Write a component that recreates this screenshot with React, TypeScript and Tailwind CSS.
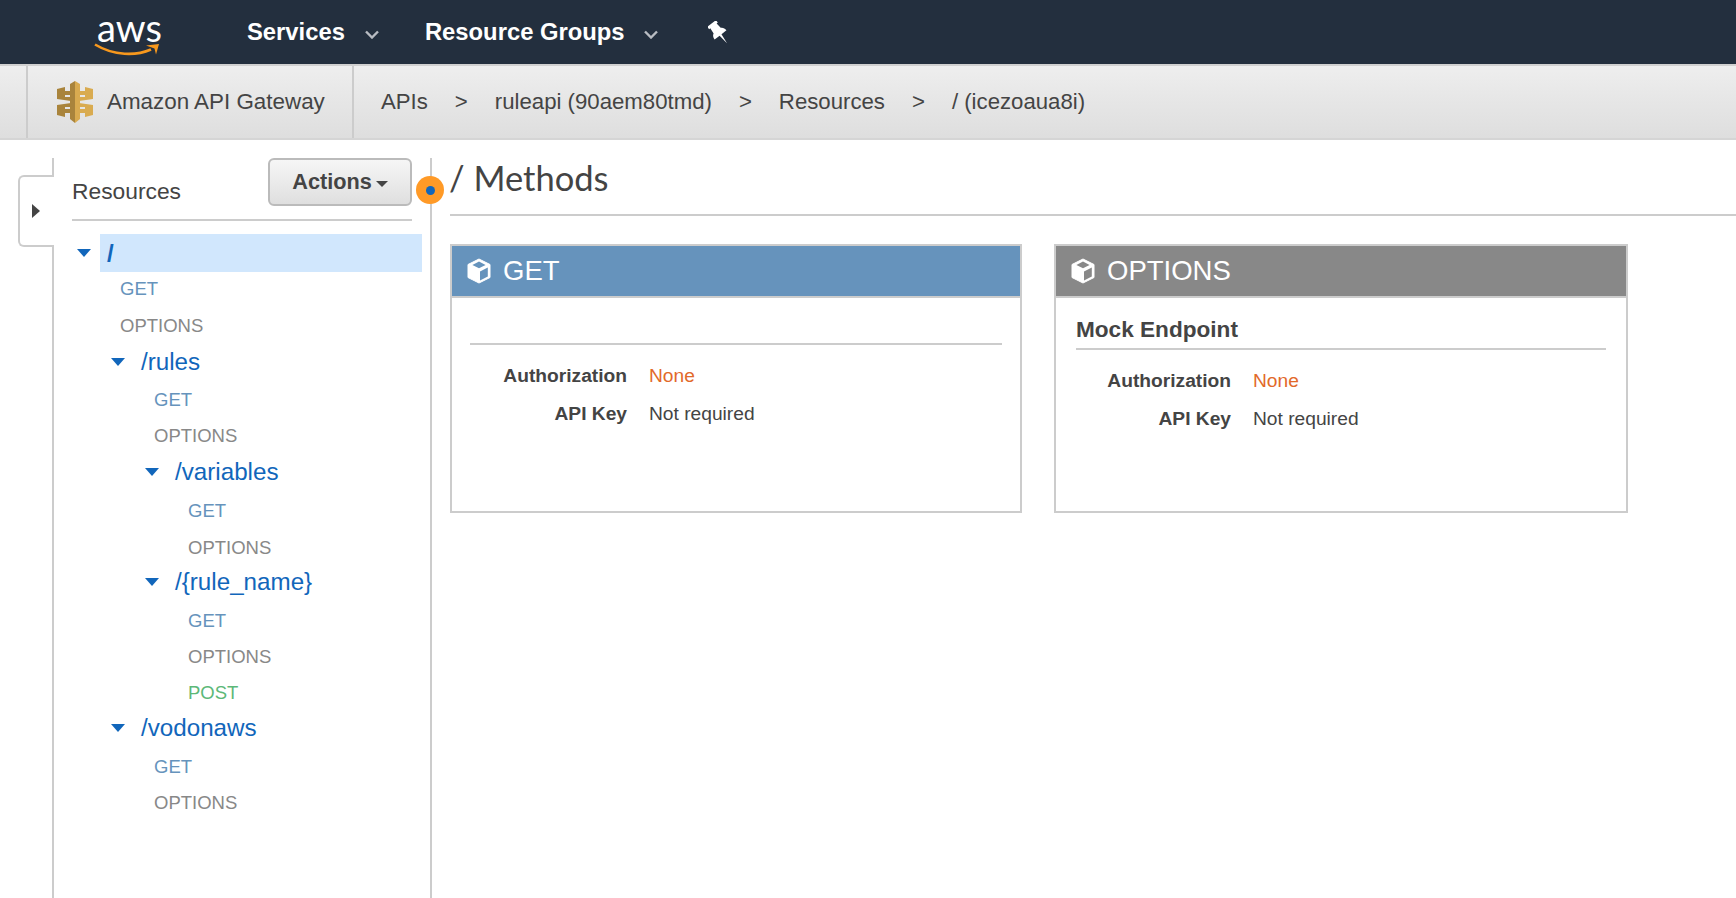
const sans = '"Liberation Sans", Arial, sans-serif';

function Chevron() {
  return (
    <svg width="14" height="9" viewBox="0 0 14 9" className="text-[#b8bcc2]">
      <path d="M1 1.5 7 7.5 13 1.5" fill="none" stroke="currentColor" strokeWidth="2.4" />
    </svg>
  );
}

function Cube({ fill }: { fill: string }) {
  return (
    <svg width="24" height="26" viewBox="0 0 24 26">
      <path d="M12 1 23 6.5V19.5L12 25 1 19.5V6.5Z" fill="#fff" stroke="#fff" strokeLinejoin="round" />
      <path d="M13 13.4 20.8 9.4V18.4L13 22.4Z" fill={fill} />
      <path d="M12 3.6 18.6 6.9 12 10.2 5.4 6.9Z" fill={fill} />
    </svg>
  );
}

function Caret({ className = '' }: { className?: string }) {
  return (
    <svg width="14" height="8" viewBox="0 0 14 8" className={className}>
      <path d="M0 0H14L7 8Z" fill="#1166bb" />
    </svg>
  );
}

function TopNav() {
  return (
    <header className="h-[64px] bg-[#232f3e] flex items-center text-white">
      <div className="w-[247px] pl-[94px] shrink-0">
        <div className="relative w-[66px] h-[52px]">
          <span className="absolute left-[3px] top-[1px] text-[38px] leading-[40px] font-['Lato']">aws</span>
          <svg width="66" height="16" viewBox="0 0 66 16" className="absolute left-0 top-[36px]">
            <path d="M1 2.5C20 14 42 14 57 7.5" fill="none" stroke="#f7981d" strokeWidth="2.6" />
            <path d="M52 3.5 65 2 62 12.5 60.5 6.5Z" fill="#f7981d" />
          </svg>
        </div>
      </div>
      <span className="text-[23.8px] font-bold">Services</span>
      <span className="ml-[20px] mt-[4px] flex"><Chevron /></span>
      <span className="ml-[46px] text-[23.8px] font-bold">Resource Groups</span>
      <span className="ml-[19px] mt-[4px] flex"><Chevron /></span>
      <svg width="24" height="26" viewBox="0 0 24 26" className="ml-[50px] mt-[4px]">
        <g transform="rotate(-38 11 12)">
          <path d="M5.5 0H16.5V3H15L15.5 9C17.5 10 18.5 12 18.5 14.5H12.2L11 25 9.8 14.5H3.5C3.5 12 4.5 10 6.5 9L7 3H5.5Z" fill="#fff" />
        </g>
      </svg>
    </header>
  );
}

function GatewayLogo() {
  return (
    <svg width="36" height="42" viewBox="0 0 36 42">
      <path d="M0 8 8 6V10H14V14H8V16H14V20L0 18Z" fill="#a9843c" />
      <path d="M0 24 14 22V26H8V28H14V32H8V36L0 34Z" fill="#a9843c" />
      <path d="M36 8 28 6V10H22V14H28V16H22V20L36 18Z" fill="#d9ab50" />
      <path d="M36 24 22 22V26H28V28H22V32H28V36L36 34Z" fill="#d9ab50" />
      <path d="M18 0 13 3V38L18 42Z" fill="#a9843c" />
      <path d="M18 0 23 3V38L18 42Z" fill="#d9ab50" />
    </svg>
  );
}

function SubNav() {
  return (
    <div className="h-[76px] flex items-stretch border-y-2 border-t-[#d0d0d0] border-b-[#d5d5d5] bg-gradient-to-b from-[#eeeeee] to-[#dedede] text-[22.2px] text-[#444]">
      <div className="w-[28px] border-r-2 border-[#cccccc]" />
      <div className="w-[326px] border-r-2 border-[#cccccc] flex items-center pl-[29px]">
        <GatewayLogo />
        <span className="ml-[14px] text-[22.4px]">Amazon API Gateway</span>
      </div>
      <div className="flex items-center pl-[27px]">
        <span>APIs</span>
        <span className="ml-[27px]">&gt;</span>
        <span className="ml-[27px]">ruleapi (90aem80tmd)</span>
        <span className="ml-[27px]">&gt;</span>
        <span className="ml-[27px]">Resources</span>
        <span className="ml-[27px]">&gt;</span>
        <span className="ml-[27px]">/ (icezoaua8i)</span>
      </div>
    </div>
  );
}

type Row = { label: string; kind: 'res' | 'GET' | 'OPTIONS' | 'POST'; cls: string; selected?: boolean };

const rows: Row[] = [
  { label: '/', kind: 'res', cls: 'h-[38px] pl-[24px]', selected: true },
  { label: 'GET', kind: 'GET', cls: 'h-[36px] pb-[2px] pl-[48px]' },
  { label: 'OPTIONS', kind: 'OPTIONS', cls: 'h-[36px] pl-[48px]' },
  { label: '/rules', kind: 'res', cls: 'h-[38px] pb-[2px] pl-[58px]' },
  { label: 'GET', kind: 'GET', cls: 'h-[36px] pl-[82px]' },
  { label: 'OPTIONS', kind: 'OPTIONS', cls: 'h-[36px] pl-[82px]' },
  { label: '/variables', kind: 'res', cls: 'h-[38px] pb-[2px] pl-[92px]' },
  { label: 'GET', kind: 'GET', cls: 'h-[38px] pl-[116px]' },
  { label: 'OPTIONS', kind: 'OPTIONS', cls: 'h-[36px] pl-[116px]' },
  { label: '/{rule_name}', kind: 'res', cls: 'h-[36px] pb-[4px] pl-[92px]' },
  { label: 'GET', kind: 'GET', cls: 'h-[38px] pl-[116px]' },
  { label: 'OPTIONS', kind: 'OPTIONS', cls: 'h-[36px] pb-[2px] pl-[116px]' },
  { label: 'POST', kind: 'POST', cls: 'h-[36px] pb-[2px] pl-[116px]' },
  { label: '/vodonaws', kind: 'res', cls: 'h-[36px] pb-[4px] pl-[58px]' },
  { label: 'GET', kind: 'GET', cls: 'h-[38px] pl-[82px]' },
  { label: 'OPTIONS', kind: 'OPTIONS', cls: 'h-[36px] pb-[2px] pl-[82px]' },
];

const methodColor = { GET: 'text-[#6693bc]', OPTIONS: 'text-[#888888]', POST: 'text-[#5cb878]' };

function Tree() {
  return (
    <div className="mt-[13px] mr-[-10px]">
      {rows.map((row, i) =>
        row.kind === 'res' ? (
          <div key={i} className={`flex items-center ${row.cls} text-[24.2px] text-[#1166bb]`}>
            <Caret className="-ml-[19px] mr-[16px] shrink-0" />
            {row.selected ? (
              <span className="flex-1 h-full bg-[#d1e7fd] flex items-center pl-[7px] pt-[2px] -ml-[7px] font-bold">{row.label}</span>
            ) : (
              <span>{row.label}</span>
            )}
          </div>
        ) : (
          <div key={i} className={`flex items-center ${row.cls} text-[18.5px] ${methodColor[row.kind]}`}>{row.label}</div>
        )
      )}
    </div>
  );
}

function Sidebar() {
  return (
    <aside className="relative w-[432px] shrink-0 mt-[18px] pl-[72px] pr-[18px] h-full border-r-2 border-[#cccccc]">
      {/* collapse tab, sits on the rail */}
      <div className="absolute left-[52px] top-0 bottom-0 w-[2px] bg-[#cccccc]" />
      <div className="absolute left-[18px] top-[17px] w-[36px] h-[72px] bg-white border-2 border-r-0 border-[#cccccc] rounded-l-[6px] flex items-center justify-center">
        <svg width="8" height="14" viewBox="0 0 8 14" className="-ml-[2px]"><path d="M0 0 8 7 0 14Z" fill="#444" /></svg>
      </div>
      <div className="flex items-start justify-between h-[63px] border-b-2 border-[#cccccc]">
        <span className="mt-[16px] text-[22.8px] leading-[34px] text-[#444]">Resources</span>
        <button className="w-[144px] h-[48px] rounded-[6px] border-2 border-[#bbbbbb] bg-gradient-to-b from-[#f6f6f6] to-[#dfdfdf] text-[21.7px] font-bold text-[#444] flex items-center justify-center">
          Actions
          <svg width="12" height="6" viewBox="0 0 12 6" className="ml-[4px] mt-[3px]"><path d="M0 0H12L6 6Z" fill="#444" /></svg>
        </button>
      </div>
      <Tree />
      <div className="absolute right-[-14px] top-[18px] w-[28px] h-[28px] rounded-full bg-[#ff9a27] flex items-center justify-center">
        <div className="w-[9px] h-[9px] rounded-full bg-[#1166bb]" />
      </div>
    </aside>
  );
}

function MethodCard({ name, color, headCls, bodyCls, titleCls, gridCls, endpoint }: {
  name: string; color: string; headCls: string; bodyCls: string; titleCls: string; gridCls: string; endpoint: string;
}) {
  return (
    <div className="h-[269px] border-2 border-[#cccccc] bg-white">
      <div className={`h-[50px] flex items-center pl-[15px] text-white text-[27.5px] ${headCls}`}>
        <Cube fill={color} />
        <span className="ml-[12px]">{name}</span>
      </div>
      <div className="h-[2px] bg-[#cccccc]" />
      <div className={bodyCls}>
        <div className={`flex items-end pb-[4px] border-b-2 border-[#cccccc] text-[22.6px] font-bold text-[#444] leading-[28px] whitespace-nowrap ${titleCls}`}>{endpoint}</div>
        <div className={`mt-[19px] grid gap-y-[14px] text-[19.2px] leading-[24px] text-[#444] ${gridCls}`}>
          <span className="font-bold text-right">Authorization</span>
          <span className="text-[#e2692a]">None</span>
          <span className="font-bold text-right">API Key</span>
          <span>Not required</span>
        </div>
      </div>
    </div>
  );
}

export default function App() {
  return (
    <div className="h-[898px] overflow-hidden bg-white flex flex-col" style={{ fontFamily: sans }}>
      <TopNav />
      <SubNav />
      <main className="flex-1 flex min-h-0">
        <Sidebar />
        <section className="flex-1 pl-[18px]">
          <h1 className="h-[76px] pt-[17px] border-b-2 border-[#cccccc] font-['Lato'] text-[34.5px] leading-[42px] text-[#444]">
            <span className="-ml-[1px]">/ Methods</span>
          </h1>
          <div className="mt-[28px] flex gap-[32px]">
            <div className="w-[572px]">
              <MethodCard name="GET" color="#6693bc" headCls="bg-[#6693bc]" bodyCls="px-[18px]" titleCls="h-[47px]" gridCls="grid-cols-[157px_1fr] gap-x-[22px]" endpoint="" />
            </div>
            <div className="w-[574px]">
              <MethodCard name="OPTIONS" color="#888888" headCls="bg-[#888888]" bodyCls="px-[20px]" titleCls="h-[52px]" gridCls="grid-cols-[155px_1fr] gap-x-[22px]" endpoint="Mock Endpoint" />
            </div>
          </div>
        </section>
      </main>
    </div>
  );
}
